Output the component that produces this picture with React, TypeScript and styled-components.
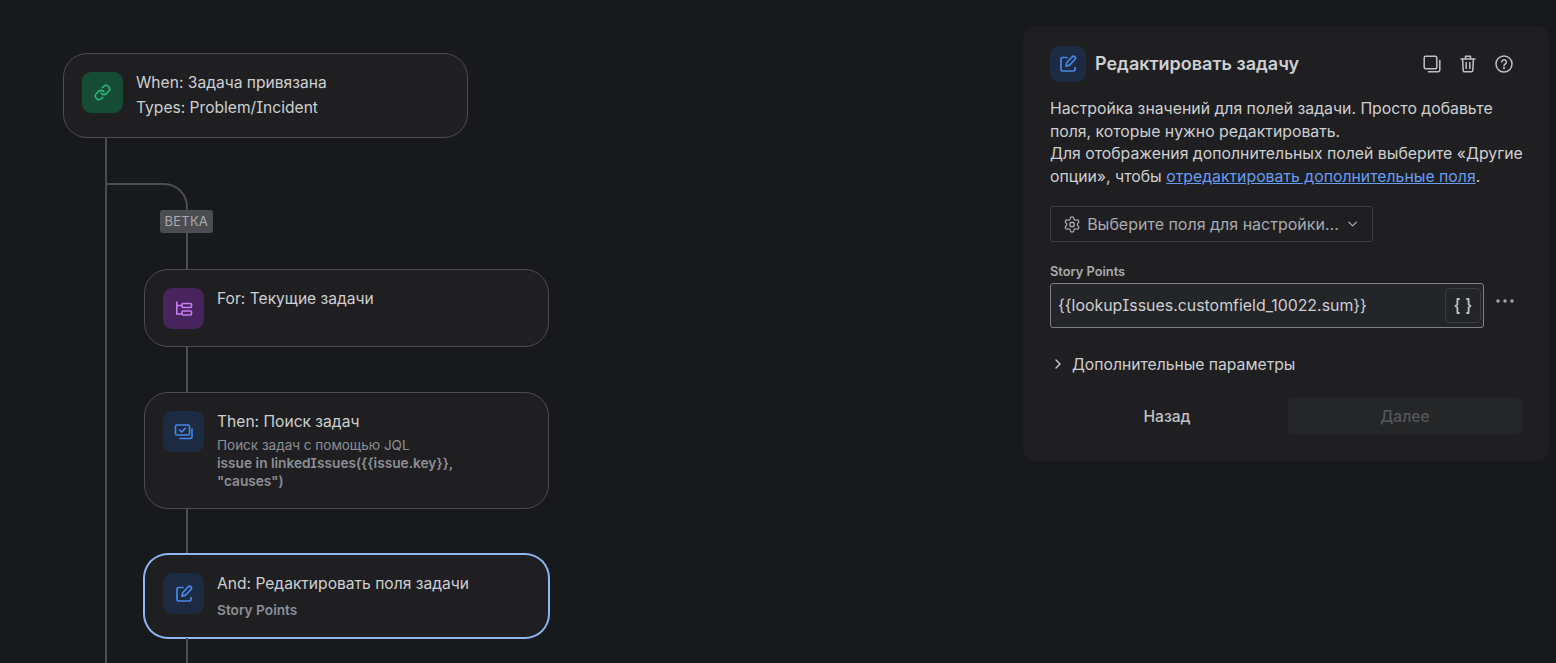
import React from "react"
import styled, { createGlobalStyle } from "styled-components"
import { ChevronDown, ChevronRight, Settings, Ellipsis, Link } from "lucide-react"

const GlobalStyle = createGlobalStyle`
  html, body {
    margin: 0;
    padding: 0;
    background: #18191c;
  }

  body {
    font-family: Inter, "Noto Sans", sans-serif;
    font-feature-settings: "cv08";
    color: #cecfd2;
  }

  * {
    box-sizing: border-box;
  }
`

const Page = styled.div`
  display: flex;
  justify-content: space-between;
  align-items: flex-start;
  height: 663px;
  overflow: hidden;
`

const Canvas = styled.div`
  padding: 53px 0 0 63px;
  width: 500px;
`

const Track = styled.div`
  margin-left: 42px;
  padding: 45px 0 40px 37px;
  border-left: 2px solid #4b4d51;
`

const Elbow = styled.div`
  position: relative;
  margin-left: -37px;
  width: 81px;
  height: 86px;
  border-top: 2px solid #4b4d51;
  border-right: 2px solid #4b4d51;
  border-top-right-radius: 24px;
`

const BranchBadge = styled.span`
  position: absolute;
  top: 25px;
  right: -27px;
  height: 23px;
  padding: 0 5px;
  border-radius: 3px;
  background: #4b4d51;
  color: #a9abaf;
  font-size: 13px;
  line-height: 23px;
  letter-spacing: 0.2px;
`

const Connector = styled.div<{ $height: number }>`
  margin-left: 42px;
  width: 2px;
  height: ${props => props.$height}px;
  background: #4b4d51;
`

const Card = styled.div<{ $height: number; $selected?: boolean }>`
  display: flex;
  gap: 13px;
  width: 405px;
  height: ${props => props.$height}px;
  padding: 18px;
  border: 1px solid ${props => (props.$selected ? "#8fb8f6" : "#4b4d51")};
  border-radius: 24px;
  background: #1f1f21;
  box-shadow: ${props => (props.$selected ? "0 0 0 1px #8fb8f6" : "none")};
`

const tones = {
  green: { bg: "#164b35", fg: "#2abb7f" },
  purple: { bg: "#48245d", fg: "#c97cf4" },
  blue: { bg: "#1c2b42", fg: "#4688ec" },
}

const IconTile = styled.div<{ $tone: keyof typeof tones; $size?: number }>`
  display: flex;
  align-items: center;
  justify-content: center;
  flex: none;
  width: ${props => props.$size ?? 41}px;
  height: ${props => props.$size ?? 41}px;
  border-radius: 9px;
  background: ${props => tones[props.$tone].bg};
  color: ${props => tones[props.$tone].fg};
`

const CardBody = styled.div`
  min-width: 0;
`

const CardTitle = styled.div`
  font-size: 15.6px;
  line-height: 21px;
  color: #cecfd2;
`

const CardLine = styled(CardTitle)`
  margin-top: 4px;
`

const CardSub = styled.div`
  margin-top: 4px;
  font-size: 13.5px;
  line-height: 18px;
  color: #8c8f97;
`

const CardStrong = styled.div<{ $gap?: number }>`
  margin-top: ${props => props.$gap ?? 0}px;
  font-size: 13.7px;
  font-weight: 600;
  line-height: 18px;
  color: #8c8f97;
`

const Panel = styled.aside`
  width: 526px;
  height: 435px;
  margin: 26px 7px 0 0;
  padding: 20px 27px;
  border-radius: 12px;
  background: #1f1f21;
`

const PanelHead = styled.header`
  display: flex;
  align-items: center;
  height: 36px;
`

const PanelTitle = styled.h2`
  flex: 1;
  margin: 0 0 0 9px;
  font-size: 18px;
  font-weight: 600;
  line-height: 24px;
  color: #cecfd2;
`

const HeadActions = styled.div`
  display: flex;
  align-items: center;
  gap: 19px;
  margin-right: 9px;
  color: #bfc1c4;
`

const Description = styled.p`
  margin: 16px 0 0;
  font-size: 15.8px;
  line-height: 22.6px;
  white-space: nowrap;
  color: #cecfd2;
`

const TextLink = styled.a`
  color: #669df1;
  text-decoration: underline;
`

const FieldPicker = styled.button`
  display: flex;
  align-items: center;
  gap: 6px;
  width: 323px;
  height: 36px;
  margin-top: 18px;
  padding: 0 12px;
  border: 1px solid #3d3e41;
  border-radius: 3px;
  background: transparent;
  color: #a9abaf;
  font: inherit;
  font-size: 16px;
  white-space: nowrap;
`

const FieldLabel = styled.label`
  display: block;
  margin-top: 22px;
  font-size: 12.8px;
  font-weight: 600;
  line-height: 16px;
  color: #a9abaf;
`

const FieldRow = styled.div`
  display: flex;
  align-items: flex-start;
  margin-top: 3px;
`

const InputBox = styled.div`
  display: flex;
  align-items: center;
  justify-content: space-between;
  width: 434px;
  height: 45px;
  padding: 0 2px 0 7px;
  border: 1px solid #7e8188;
  border-radius: 3px;
  background: #242528;
  font-size: 15.9px;
  color: #cecfd2;
`

const BraceButton = styled.span`
  display: flex;
  align-items: center;
  justify-content: center;
  width: 36px;
  height: 35px;
  border: 1px solid #3d3e41;
  border-radius: 4px;
  color: #bfc1c4;
`

const MoreButton = styled.span`
  display: flex;
  margin: 6px 0 0 9px;
  color: #a9abaf;
`

const AdvancedRow = styled.div`
  display: flex;
  align-items: center;
  gap: 6px;
  height: 22px;
  margin-top: 25px;
  font-size: 15.7px;
  color: #cecfd2;
`

const Footer = styled.footer`
  display: flex;
  gap: 4px;
  margin-top: 23px;
`

const FooterButton = styled.button<{ $disabled?: boolean }>`
  flex: 1;
  height: 36px;
  border: 0;
  border-radius: 3px;
  background: ${props => (props.$disabled ? "#252628" : "transparent")};
  color: ${props => (props.$disabled ? "#55575b" : "#bfc1c4")};
  font: inherit;
  font-size: 15.6px;
  font-weight: 500;
`

const EditIcon = () => (
  <svg width="20" height="20" viewBox="0 0 20 20" fill="none" stroke="currentColor" strokeWidth="1.7" strokeLinecap="round" strokeLinejoin="round">
    <path d="M9 3.5H4.5a1.5 1.5 0 0 0-1.5 1.5v10.5A1.5 1.5 0 0 0 4.5 17h11a1.5 1.5 0 0 0 1.5-1.5V13.5" />
    <path d="M14.2 2.8a1.9 1.9 0 0 1 2.7 2.7l-5.6 5.9-3.3.8.7-3.4z" />
  </svg>
)

const TreeIcon = () => (
  <svg width="18" height="18" viewBox="0 0 18 18" fill="none" stroke="currentColor" strokeWidth="1.6">
    <path d="M1.8 1.5V14h5M1.8 5.5h5" />
    <rect x="7" y="3.5" width="9.5" height="4" rx="1" />
    <rect x="7" y="11" width="9.5" height="4" rx="1" />
  </svg>
)

const IssuesIcon = () => (
  <svg width="20" height="20" viewBox="0 0 20 20" fill="none" stroke="currentColor" strokeWidth="1.6" strokeLinecap="round" strokeLinejoin="round">
    <rect x="1.5" y="3" width="14" height="10" rx="1.5" />
    <path d="m5.6 8.2 2 1.8 3.6-3.6" />
    <path d="M18 7v7.5a2 2 0 0 1-2 2H6" />
  </svg>
)

const CopyIcon = () => (
  <svg width="18" height="18" viewBox="0 0 18 18" fill="none" stroke="currentColor" strokeWidth="1.5" strokeLinecap="round" strokeLinejoin="round">
    <rect x="1.2" y="1.2" width="12.6" height="12.6" rx="1.5" />
    <path d="M16.8 5.5v9.5a1.8 1.8 0 0 1-1.8 1.8H5.5" />
  </svg>
)

const TrashIcon = () => (
  <svg width="16" height="18" viewBox="0 0 16 18" fill="none" stroke="currentColor" strokeWidth="1.5" strokeLinecap="round" strokeLinejoin="round">
    <path d="M1 4h14M5.5 4V1.2h5V4M2.6 4l.6 11.4a1.4 1.4 0 0 0 1.4 1.4h6.8a1.4 1.4 0 0 0 1.4-1.4L13.4 4M6.2 7.5v6M9.8 7.5v6" />
  </svg>
)

const HelpIcon = () => (
  <svg width="18" height="18" viewBox="0 0 18 18" fill="none" stroke="currentColor" strokeWidth="1.5" strokeLinecap="round">
    <circle cx="9" cy="9" r="8" />
    <path d="M6.8 7a2.3 2.3 0 1 1 3.5 2c-.8.5-1.3 1-1.3 1.8" />
    <circle cx="9" cy="13.2" r="0.4" />
  </svg>
)

const BracesIcon = () => (
  <svg width="18" height="16" viewBox="0 0 18 16" fill="none" stroke="currentColor" strokeWidth="1.8" strokeLinecap="round" strokeLinejoin="round">
    <path d="M5 1H3.4v5.5L1.5 8l1.9 1.5V15H5" />
    <path d="M13 1h1.6v5.5L16.5 8l-1.9 1.5V15H13" />
  </svg>
)

export default function App() {
  return (
    <Page>
      <GlobalStyle />
      <Canvas>
        <Card $height={85}>
          <IconTile $tone="green">
            <Link size={17} strokeWidth={2.2} />
          </IconTile>
          <CardBody>
            <CardTitle>When: Задача привязана</CardTitle>
            <CardLine>Types: Problem/Incident</CardLine>
          </CardBody>
        </Card>
        <Track>
          <Elbow>
            <BranchBadge>ВЕТКА</BranchBadge>
          </Elbow>
          <Card $height={78}>
            <IconTile $tone="purple">
              <TreeIcon />
            </IconTile>
            <CardBody>
              <CardTitle>For: Текущие задачи</CardTitle>
            </CardBody>
          </Card>
          <Connector $height={45} />
          <Card $height={117}>
            <IconTile $tone="blue">
              <IssuesIcon />
            </IconTile>
            <CardBody>
              <CardTitle>Then: Поиск задач</CardTitle>
              <CardSub>Поиск задач с помощью JQL</CardSub>
              <CardStrong>
                issue in linkedIssues({"{{"}issue.key{"}}"},
                <br />
                "causes")
              </CardStrong>
            </CardBody>
          </Card>
          <Connector $height={45} />
          <Card $height={84} $selected>
            <IconTile $tone="blue">
              <EditIcon />
            </IconTile>
            <CardBody>
              <CardTitle>And: Редактировать поля задачи</CardTitle>
              <CardStrong $gap={7}>Story Points</CardStrong>
            </CardBody>
          </Card>
          <Connector $height={40} />
        </Track>
      </Canvas>

      <Panel>
        <PanelHead>
          <IconTile $tone="blue" $size={36}>
            <EditIcon />
          </IconTile>
          <PanelTitle>Редактировать задачу</PanelTitle>
          <HeadActions>
            <CopyIcon />
            <TrashIcon />
            <HelpIcon />
          </HeadActions>
        </PanelHead>
        <Description>
          Настройка значений для полей задачи. Просто добавьте
          <br />
          поля, которые нужно редактировать.
          <br />
          Для отображения дополнительных полей выберите «Другие
          <br />
          опции», чтобы <TextLink>отредактировать дополнительные поля</TextLink>.
        </Description>
        <FieldPicker>
          <Settings size={19} strokeWidth={1.7} />
          Выберите поля для настройки...
          <ChevronDown size={16} strokeWidth={2} />
        </FieldPicker>
        <FieldLabel>Story Points</FieldLabel>
        <FieldRow>
          <InputBox>
            {"{{lookupIssues.customfield_10022.sum}}"}
            <BraceButton>
              <BracesIcon />
            </BraceButton>
          </InputBox>
          <MoreButton>
            <Ellipsis size={24} strokeWidth={1.5} />
          </MoreButton>
        </FieldRow>
        <AdvancedRow>
          <ChevronRight size={16} strokeWidth={2} />
          Дополнительные параметры
        </AdvancedRow>
        <Footer>
          <FooterButton>Назад</FooterButton>
          <FooterButton $disabled>Далее</FooterButton>
        </Footer>
      </Panel>
    </Page>
  )
}
